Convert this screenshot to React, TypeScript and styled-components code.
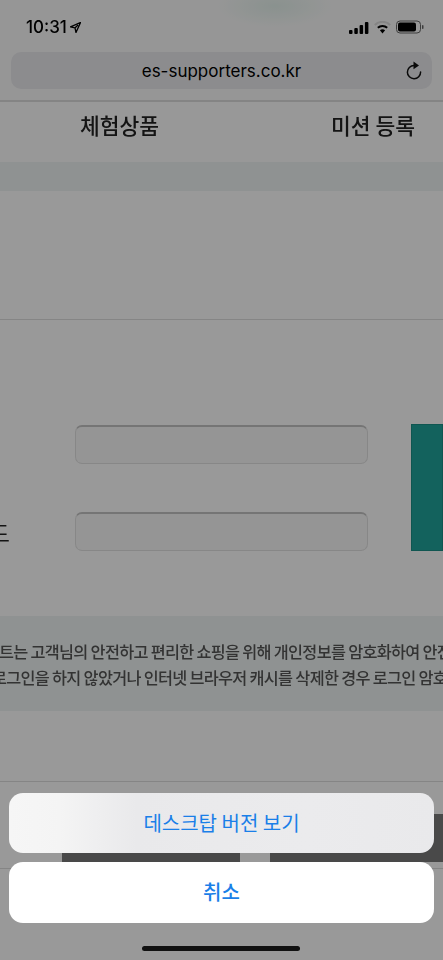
import { createGlobalStyle } from "styled-components";
import styled from "styled-components";

const GlobalStyle = createGlobalStyle`
  html, body {
    margin: 0;
    padding: 0;
    background: #fff;
  }
  * {
    box-sizing: border-box;
  }
`;

const FONT = `"Noto Sans CJK KR", "Noto Sans", sans-serif`;

const Screen = styled.div`
  position: relative;
  width: 443px;
  height: 960px;
  overflow: hidden;
  background: #fff;
  font-family: ${FONT};
`;

const Browser = styled.div`
  background: radial-gradient(ellipse 60px 22px at 275px 6px, #e6f3ee 0%, #fbfbfb 100%);
  height: 100px;
  padding: 0 11px;
  filter: blur(0.4px);
`;

const StatusBar = styled.div`
  display: flex;
  align-items: center;
  justify-content: space-between;
  height: 52px;
  padding: 2px 8px 0 15px;
`;

const Clock = styled.div`
  display: flex;
  align-items: center;
  gap: 3px;
  font-family: Inter, sans-serif;
  font-size: 17px;
  font-weight: 500;
  color: #000;
`;

const StatusIcons = styled.div`
  display: flex;
  align-items: center;
  gap: 5px;
`;

const UrlBar = styled.div`
  position: relative;
  display: flex;
  align-items: center;
  justify-content: center;
  height: 37px;
  border-radius: 10px;
  background: #eaeaed;
  font-family: Inter, sans-serif;
  font-size: 17px;
  color: #000;
`;

const Reload = styled.svg`
  position: absolute;
  right: 9px;
  top: 9px;
`;

const Page = styled.div`
  filter: blur(0.7px);
`;

const NavBar = styled.nav`
  display: flex;
  justify-content: space-between;
  height: 62px;
  padding: 8px 28px 0 80px;
  border-top: 2px solid #dcdcdc;
  background: #fdfdfd;
`;

const NavItem = styled.a`
  font-size: 21.5px;
  line-height: 30px;
  font-weight: 500;
  color: #222;
`;

const Band = styled.div`
  height: 29px;
  background: #eef4f3;
`;

const Intro = styled.div`
  height: 129px;
  border-bottom: 1px solid #dedede;
`;

const LoginForm = styled.form`
  display: flex;
  padding-top: 104px;
  height: 296px;
`;

const Fields = styled.div`
  display: flex;
  flex-direction: column;
  gap: 48px;
  padding-top: 1px;
`;

const FieldRow = styled.div`
  display: flex;
  align-items: center;
`;

const FieldLabel = styled.div`
  display: flex;
  justify-content: flex-end;
  width: 75px;
  padding-right: 65px;
  overflow: hidden;
  font-size: 23px;
  color: #222;
  white-space: nowrap;
`;

const Input = styled.div`
  width: 293px;
  height: 39px;
  border: 1px solid #e2e2e2;
  border-top: 2px solid #c4c4c4;
  border-radius: 7px;
  background: #f8f8f8;
`;

const LoginButton = styled.div`
  width: 60px;
  height: 127px;
  margin-left: 43px;
  background: #21a49c;
  border: 1px solid #1c8f88;
`;

const Notice = styled.div`
  height: 95px;
  padding-top: 22px;
  overflow: hidden;
  background: #eef4f3;
`;

const NoticeLine = styled.p<{ $offset: number }>`
  margin: 0 0 0 ${(p) => p.$offset}px;
  font-size: 16.3px;
  font-weight: 500;
  line-height: 26px;
  letter-spacing: -0.7px;
  color: #555;
  white-space: nowrap;
`;

const Spacer = styled.div`
  height: 71px;
  border-bottom: 1px solid #dedede;
`;

const Actions = styled.div`
  display: flex;
  height: 87px;
  padding-top: 32px;
  border-bottom: 1px solid #dedede;
`;

const DarkButton = styled.div<{ $width: number; $left: number }>`
  width: ${(p) => p.$width}px;
  height: 48px;
  margin-left: ${(p) => p.$left}px;
  background: #7a7a7a;
`;

const Dim = styled.div`
  position: absolute;
  inset: 0;
  background: rgba(0, 0, 0, 0.4);
`;

const Sheet = styled.div`
  position: absolute;
  left: 9px;
  right: 9px;
  top: 793px;
  display: flex;
  flex-direction: column;
  gap: 9px;
`;

const SheetButton = styled.button<{ $cancel?: boolean }>`
  height: ${(p) => (p.$cancel ? 61 : 60)}px;
  padding: 0 0 2px;
  border: 0;
  border-radius: 14px;
  background: ${(p) =>
    p.$cancel
      ? "#fff"
      : "linear-gradient(90deg, #f6f6f6 0%, #f4f4f4 12%, #e9e9eb 30%, #ebebed 70%, #e9e9eb 100%)"};
  font-family: ${FONT};
  font-size: 20px;
  font-weight: ${(p) => (p.$cancel ? 500 : 400)};
  color: #1a7fe8;
`;

const HomeIndicator = styled.div`
  position: absolute;
  left: 142px;
  top: 946px;
  width: 158px;
  height: 5px;
  border-radius: 3px;
  background: #111;
`;

export default function App() {
  return (
    <>
      <GlobalStyle />
      <Screen>
        <Browser>
          <StatusBar>
            <Clock>
              10:31
              <svg width="11" height="11" viewBox="0 0 11 11">
                <path d="M10.5 .5 L.5 4.8 L5 5.8 L6 10.5 Z M8 3 L5.4 5.4" fill="none" stroke="#000" strokeWidth="1.3" strokeLinejoin="round" />
              </svg>
            </Clock>
            <StatusIcons>
              <svg width="20" height="13" viewBox="0 0 20 13">
                <rect x="0" y="9" width="3.5" height="4" rx="1" fill="#000" />
                <rect x="5.3" y="7" width="3.5" height="6" rx="1" fill="#000" />
                <rect x="10.6" y="4" width="3.5" height="9" rx="1" fill="#000" />
                <rect x="15.9" y="1" width="3.5" height="12" rx="1" fill="#000" />
              </svg>
              <svg width="17" height="13" viewBox="0 0 17 13">
                <path d="M.8 4 A11 11 0 0 1 16.2 4" fill="none" stroke="#dcdcdc" strokeWidth="2" />
                <path d="M3.8 6.8 A7 7 0 0 1 13.2 6.8" fill="none" stroke="#000" strokeWidth="2" />
                <path d="M8.5 12.5 L5.9 9.3 A4 4 0 0 1 11.1 9.3 Z" fill="#000" />
              </svg>
              <svg width="28" height="14" viewBox="0 0 28 14">
                <rect x=".5" y="1" width="24" height="12" rx="3.5" fill="none" stroke="#666" />
                <rect x="2" y="2.5" width="18" height="9" rx="2" fill="#000" />
                <rect x="26" y="5" width="1.5" height="4" rx=".7" fill="#666" />
              </svg>
            </StatusIcons>
          </StatusBar>
          <UrlBar>
            es-supporters.co.kr
            <Reload width="18" height="20" viewBox="0 0 18 20">
              <path d="M9 4.5 A6.6 6.6 0 1 0 15.6 11" fill="none" stroke="#111" strokeWidth="1.5" strokeLinecap="round" />
              <path d="M8.5 .5 L14 4.5 L8.5 8.2 Z" fill="#111" />
            </Reload>
          </UrlBar>
        </Browser>
        <Page>
          <NavBar>
            <NavItem>체험상품</NavItem>
            <NavItem>미션 등록</NavItem>
          </NavBar>
          <Band />
          <Intro />
          <LoginForm>
            <Fields>
              <FieldRow>
                <FieldLabel />
                <Input />
              </FieldRow>
              <FieldRow>
                <FieldLabel>패스워드</FieldLabel>
                <Input />
              </FieldRow>
            </Fields>
            <LoginButton />
          </LoginForm>
          <Notice>
            <NoticeLine $offset={-1}>트는 고객님의 안전하고 편리한 쇼핑을 위해 개인정보를 암호화하여 안전</NoticeLine>
            <NoticeLine $offset={-8}>로그인을 하지 않았거나 인터넷 브라우저 캐시를 삭제한 경우 로그인 암호</NoticeLine>
          </Notice>
          <Spacer />
          <Actions>
            <DarkButton $left={62} $width={178} />
            <DarkButton $left={30} $width={173} />
          </Actions>
        </Page>
        <Dim />
        <Sheet>
          <SheetButton>데스크탑 버전 보기</SheetButton>
          <SheetButton $cancel>취소</SheetButton>
        </Sheet>
        <HomeIndicator />
      </Screen>
    </>
  );
}
